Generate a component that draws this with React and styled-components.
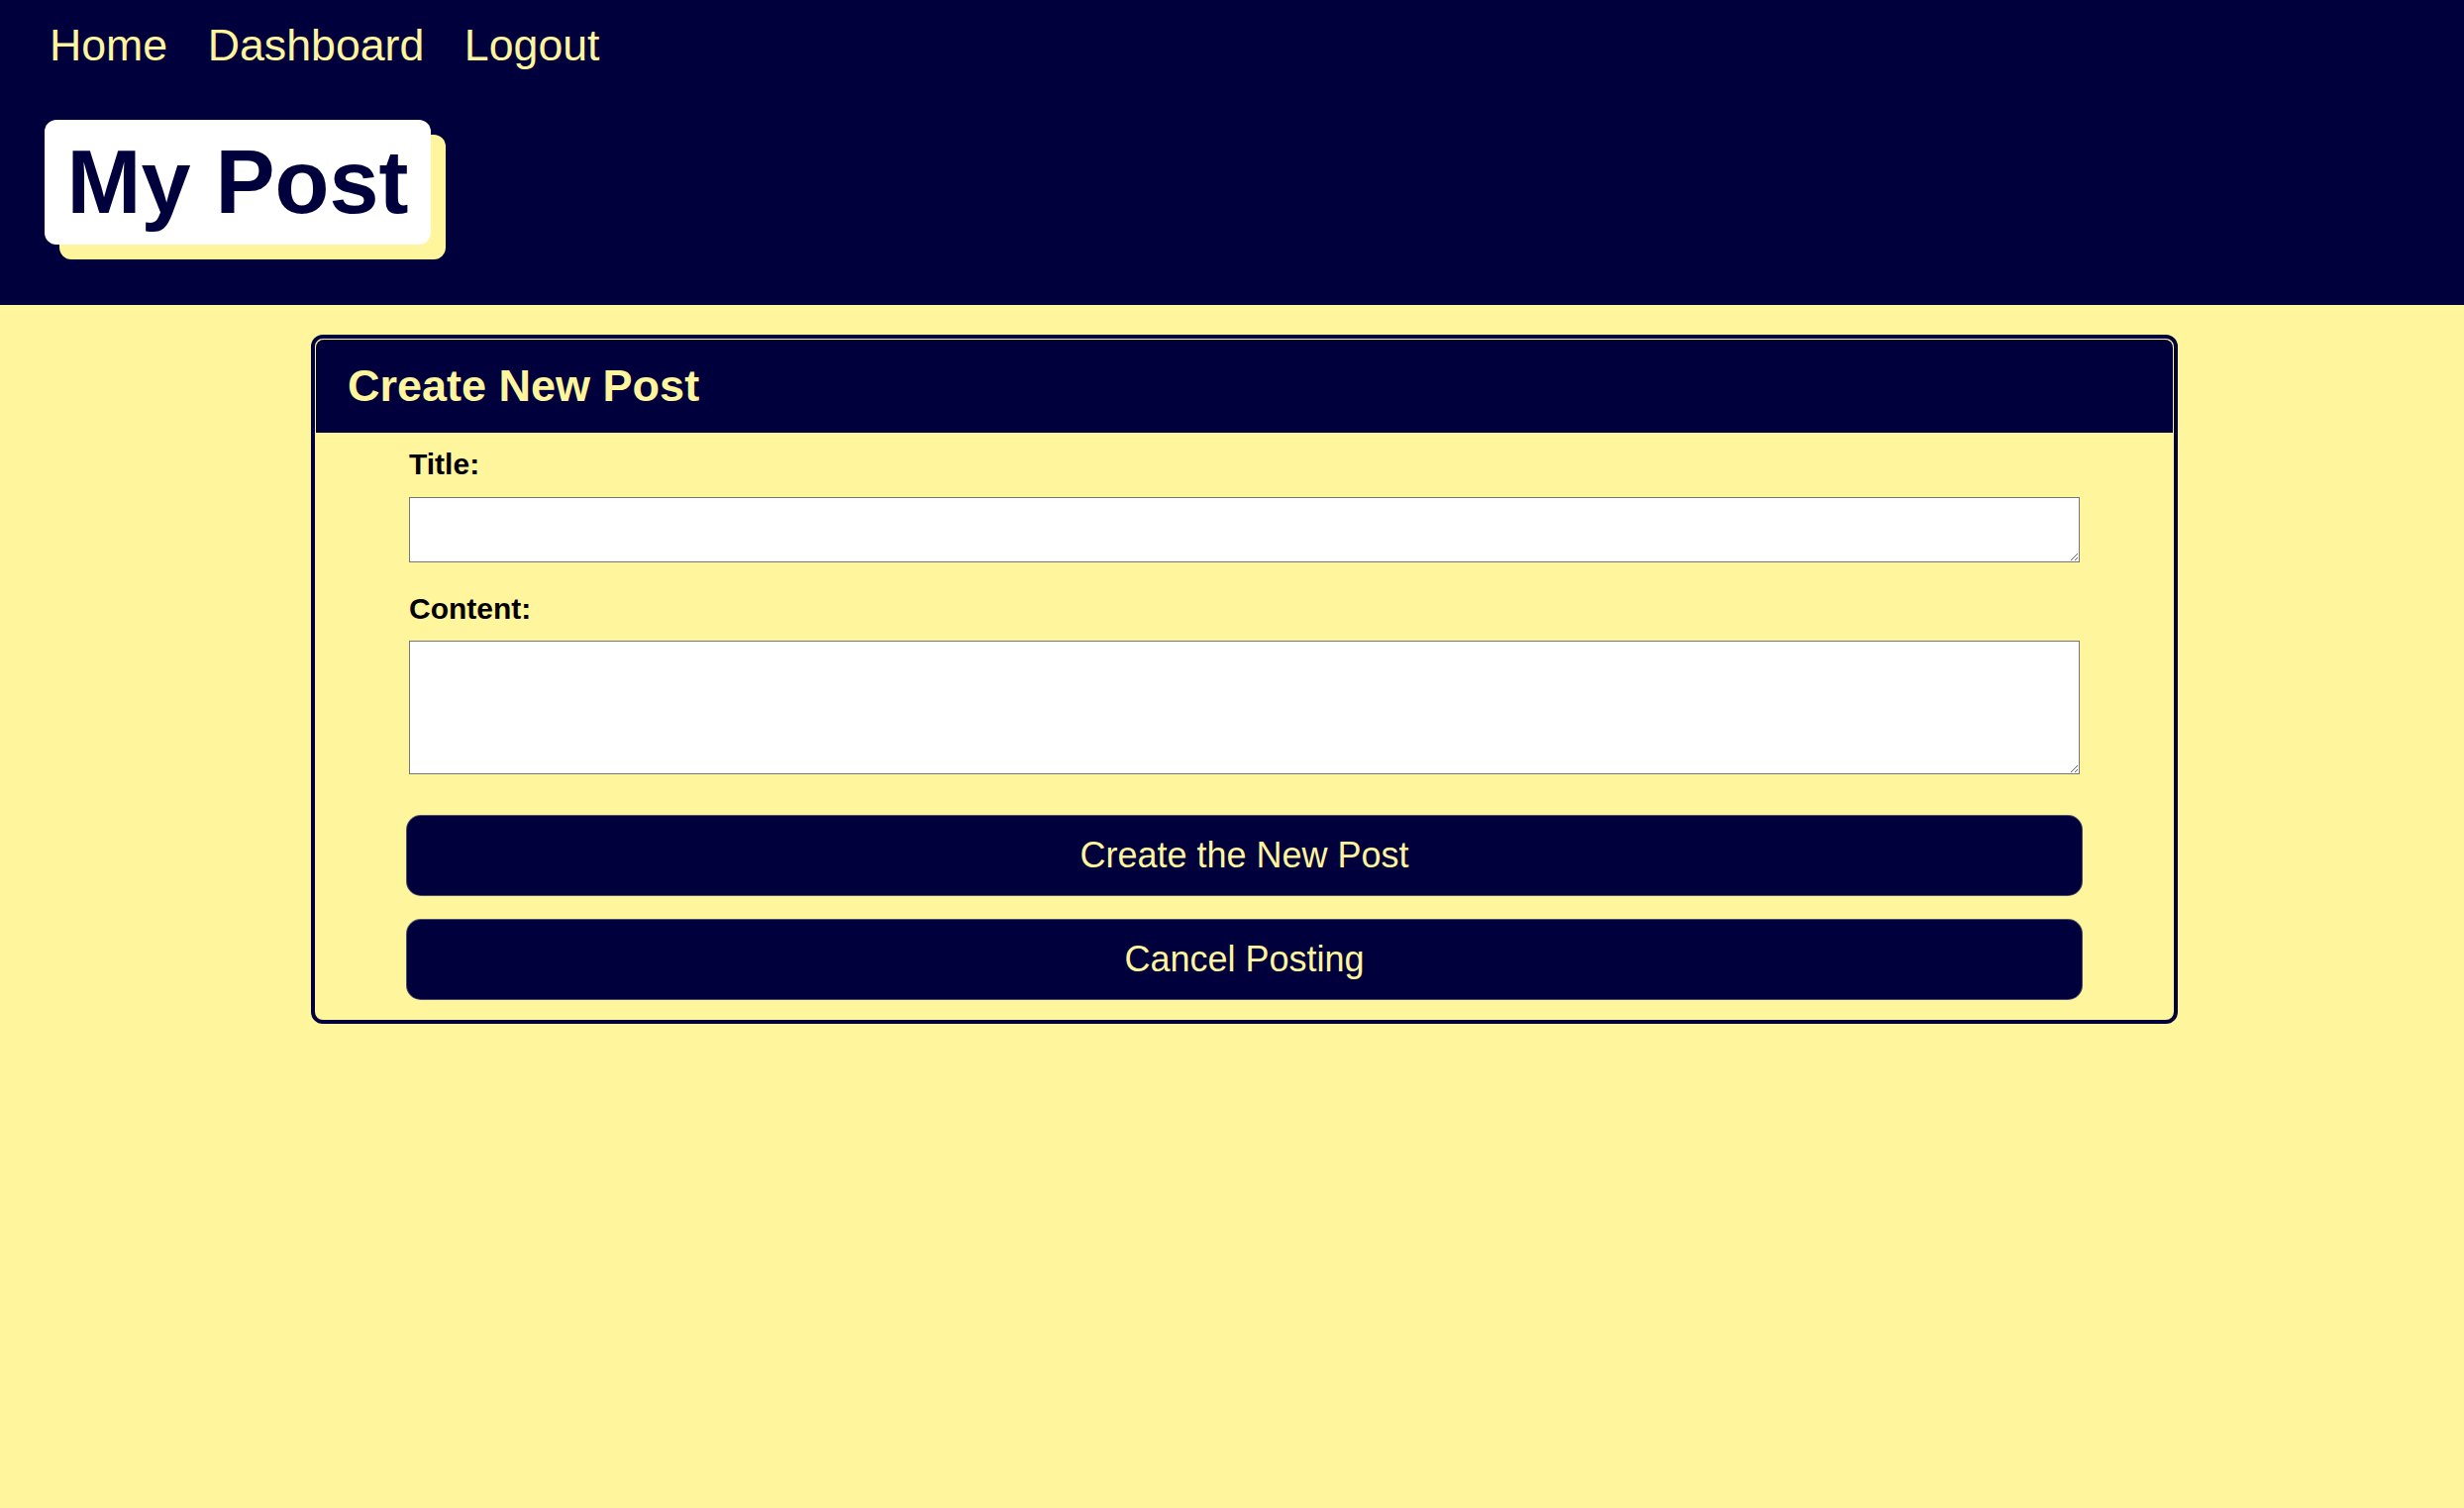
import React from "react";
import styled, { createGlobalStyle } from "styled-components";

const NAVY = "#00003d";
const YELLOW = "#fff59d";

const GlobalStyle = createGlobalStyle`
  html, body {
    margin: 0;
    padding: 0;
    background: ${YELLOW};
    font-family: "Liberation Sans", Arial, sans-serif;
  }
  * { box-sizing: border-box; }
`;

const Page = styled.div`
  min-height: 1523px;
  background: ${YELLOW};
`;

const Header = styled.header`
  background: ${NAVY};
  padding: 20px 0 61px 45px;
`;

const Nav = styled.nav`
  display: flex;
  gap: 40.5px;
  padding-left: 5px;
`;

const NavLink = styled.a`
  color: ${YELLOW};
  font-size: 44.7px;
  line-height: 51px;
  text-decoration: none;
  cursor: pointer;
`;

const Title = styled.h1`
  display: inline-block;
  margin: 50px 0 0 0;
  padding: 11px 22.5px;
  background: #ffffff;
  color: ${NAVY};
  font-size: 90px;
  font-weight: 700;
  line-height: 104px;
  border-radius: 12px;
  box-shadow: 15px 15px 0 ${YELLOW};
`;

const Main = styled.main`
  padding: 30px 0 0 314px;
`;

const Card = styled.section`
  width: 1885px;
  border: 4px solid ${NAVY};
  border-radius: 12px;
  overflow: hidden;
`;

const CardHeader = styled.h2`
  margin: 1px 1px 0 1px;
  padding: 21px 32px;
  background: ${NAVY};
  color: ${YELLOW};
  font-size: 45px;
  font-weight: 700;
  line-height: 52px;
  border-radius: 8px 8px 0 0;
`;

const Form = styled.form`
  display: flex;
  flex-direction: column;
  padding: 14px 95px 20px 95px;
`;

const Label = styled.label`
  display: block;
  color: #000;
  font-size: 30px;
  font-weight: 700;
  line-height: 35px;
  margin: ${(p) => (p.$first ? "0" : "29px")} 0 ${(p) => (p.$first ? "16px" : "15px")} 0;
`;

const TextArea = styled.textarea`
  display: block;
  width: 100%;
  height: ${(p) => p.$h}px;
  background: #fff;
  border: 1px solid #767676;
  font-family: "Liberation Mono", monospace;
  font-size: 16px;
  margin: 0;
`;

const Button = styled.button`
  display: block;
  margin: ${(p) => (p.$first ? "41px" : "23px")} -3px 0 -3px;
  height: 82px;
  background: ${NAVY};
  color: ${YELLOW};
  font-family: "Liberation Sans", Arial, sans-serif;
  font-size: 36px;
  border: 1px solid rgba(110, 110, 130, 0.7);
  border-radius: 15px;
  cursor: pointer;
`;

export default function App() {
  return (
    <Page>
      <GlobalStyle />
      <Header>
        <Nav>
          <NavLink>Home</NavLink>
          <NavLink>Dashboard</NavLink>
          <NavLink>Logout</NavLink>
        </Nav>
        <Title>My Post</Title>
      </Header>
      <Main>
        <Card>
          <CardHeader>Create New Post</CardHeader>
          <Form onSubmit={(e) => e.preventDefault()}>
            <Label $first htmlFor="post-title">Title:</Label>
            <TextArea id="post-title" $h={66} />
            <Label htmlFor="post-content">Content:</Label>
            <TextArea id="post-content" $h={135} />
            <Button $first type="submit">Create the New Post</Button>
            <Button type="button">Cancel Posting</Button>
          </Form>
        </Card>
      </Main>
    </Page>
  );
}
